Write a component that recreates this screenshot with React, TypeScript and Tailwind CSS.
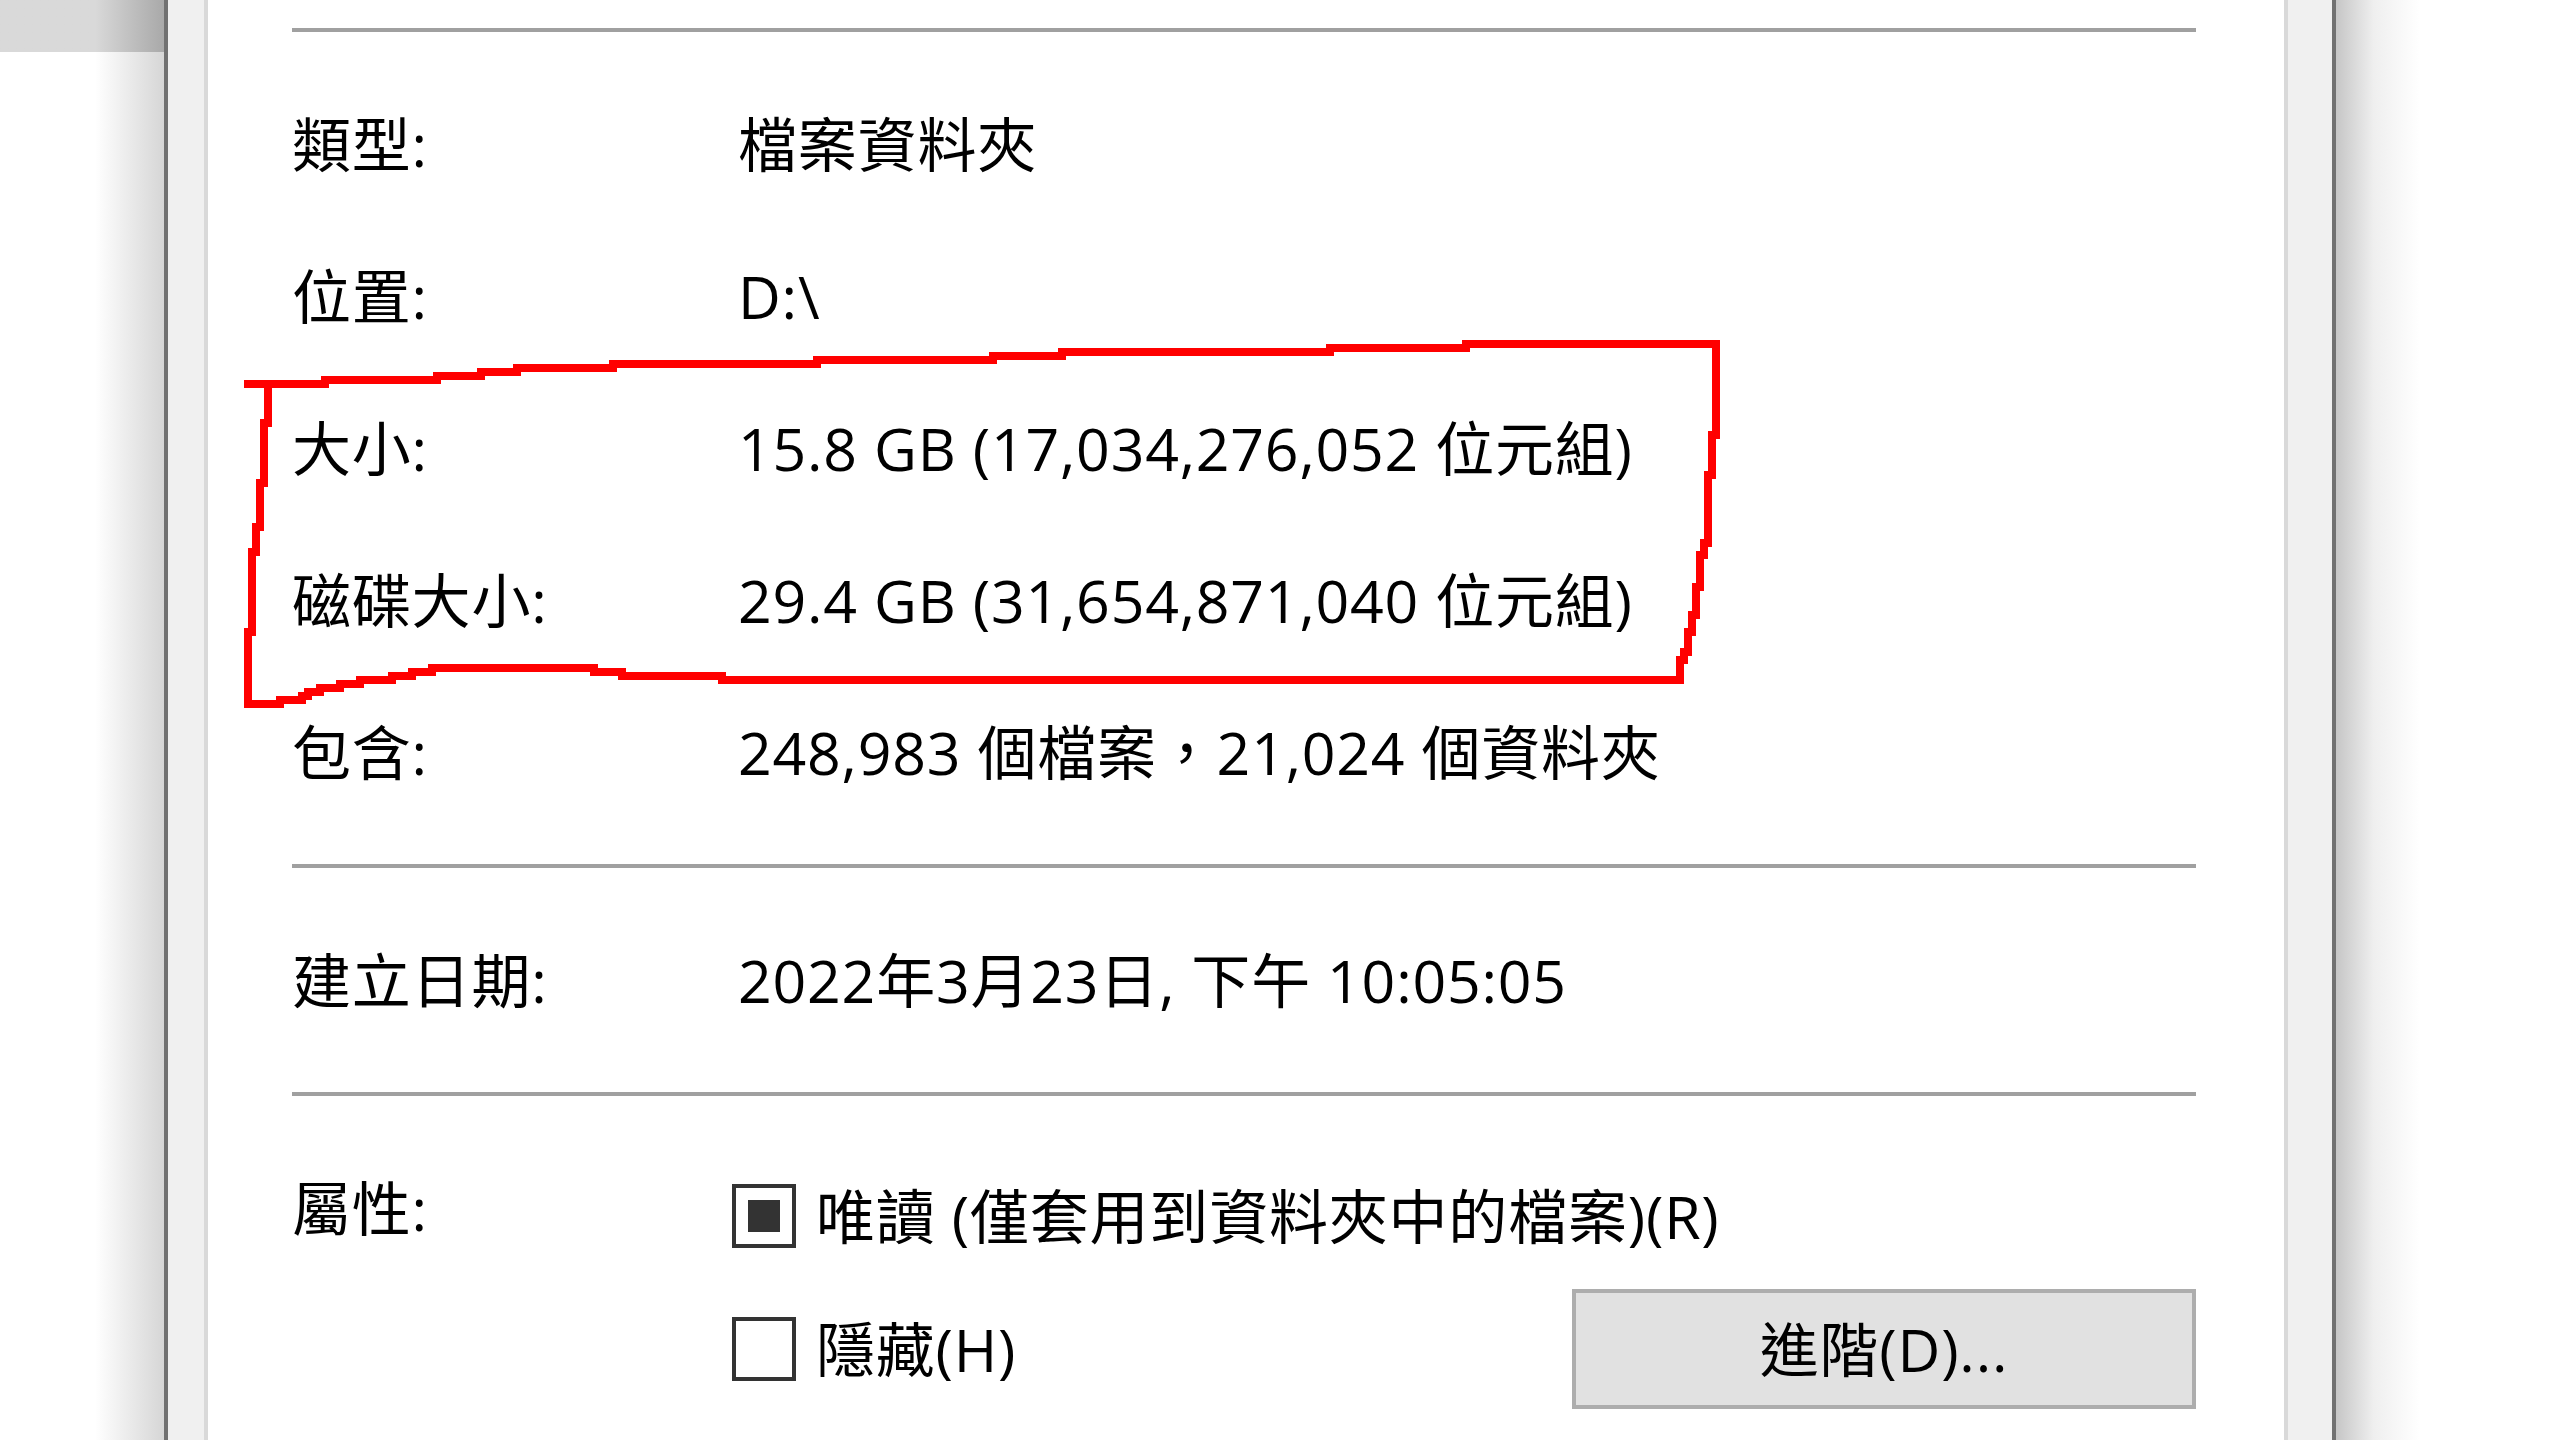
import React from "react";

type InfoRowProps = {
    label: string;
    value: string;
};

const InfoRow = ({ label, value }: InfoRowProps) => (
    <div className="grid h-[152px] grid-cols-[446px_1fr] items-center">
        <span>{label}</span>
        <span>{value}</span>
    </div>
);

const Separator = () => <div className="h-[4px] w-full bg-[#a0a0a0]" />;

type CheckBoxProps = {
    checked?: boolean;
    label: string;
};

const CheckBox = ({ checked, label }: CheckBoxProps) => (
    <div className="-ml-[6px] flex items-center gap-[20px]">
        <div className="flex h-[64px] w-[64px] items-center justify-center border-[4px] border-[#333333] bg-white">
            {checked && <div className="h-[32px] w-[32px] bg-[#333333]" />}
        </div>
        <span>{label}</span>
    </div>
);

// hand-drawn red marker around the size rows
const Annotation = () => (
    <svg
        className="pointer-events-none absolute left-0 top-0"
        width={2560}
        height={1440}
        viewBox="0 0 2560 1440"
        shapeRendering="crispEdges"
    >
        <path
            d="M248 384 H325 V380 H437 V376 H481 V372 H517 V368 H613 V364 H817 V360 H993 V356 H1062 V352 H1330 V348 H1466 V344 H1716 V435 H1712 V475 H1708 V543 H1704 V555 H1700 V587 H1696 V615 H1692 V632 H1688 V652 H1684 V660 H1680 V680 H722 V676 H622 V672 H594 V668 H432 V672 H412 V676 H392 V680 H360 V684 H340 V688 H320 V692 H308 V696 H302 V700 H280 V704 H248 V632 H252 V552 H256 V527 H260 V483 H264 V423 H268 V384"
            fill="none"
            stroke="#ff0000"
            strokeWidth={8}
            strokeLinejoin="miter"
            strokeLinecap="square"
        />
    </svg>
);

const App = () => {
    return (
        <div className="relative flex h-[1440px] w-[2560px] overflow-hidden bg-white font-['Open_Sans','Noto_Sans_CJK_TC',sans-serif] text-[59px] leading-none tracking-[0.8px] text-black">
            {/* window behind + shadow */}
            <div className="flex w-[164px] flex-col">
                <div className="h-[52px] bg-gradient-to-r from-[#d9d9d9] from-[58%] to-[#a9a9a9]" />
                <div className="flex-1 bg-gradient-to-r from-white from-[58%] to-[#d6d6d6]" />
            </div>
            <div className="w-[4px] bg-[#717171]" />
            <div className="w-[36px] bg-[#f0f0f0]" />

            {/* tab page */}
            <div className="w-[2084px] border-x-[4px] border-[#d9d9d9] bg-white pl-[84px] pr-[88px] pt-[28px]">
                <Separator />
                <div className="py-[36px]">
                    <InfoRow label="類型:" value="檔案資料夾" />
                    <InfoRow label="位置:" value="D:\" />
                    <InfoRow label="大小:" value="15.8 GB (17,034,276,052 位元組)" />
                    <InfoRow label="磁碟大小:" value="29.4 GB (31,654,871,040 位元組)" />
                    <InfoRow label="包含:" value="248,983 個檔案，21,024 個資料夾" />
                </div>
                <Separator />
                <div className="py-[36px]">
                    <InfoRow label="建立日期:" value="2022年3月23日, 下午 10:05:05" />
                </div>
                <Separator />

                <div className="pt-[88px]">
                    <div className="grid grid-cols-[446px_1fr]">
                        <span className="leading-[48px]">屬性:</span>
                        <CheckBox checked label="唯讀 (僅套用到資料夾中的檔案)(R)" />
                    </div>
                    <div className="mt-[41px] grid grid-cols-[446px_1fr]">
                        <span />
                        <div className="flex items-center justify-between">
                            <CheckBox label="隱藏(H)" />
                            <button className="flex h-[120px] w-[624px] items-center justify-center border-[4px] border-[#adadad] bg-[#e1e1e1] text-[59px] leading-none tracking-[0.8px]">
                                進階(D)...
                            </button>
                        </div>
                    </div>
                </div>
            </div>

            <div className="w-[44px] bg-[#f0f0f0]" />
            <div className="w-[4px] bg-[#717171]" />
            <div className="w-[84px] bg-gradient-to-r from-[#c6c6c6] via-[#efefef] via-[45%] to-white" />
            <div className="flex-1 bg-white" />

            <Annotation />
        </div>
    );
};

export default App;
